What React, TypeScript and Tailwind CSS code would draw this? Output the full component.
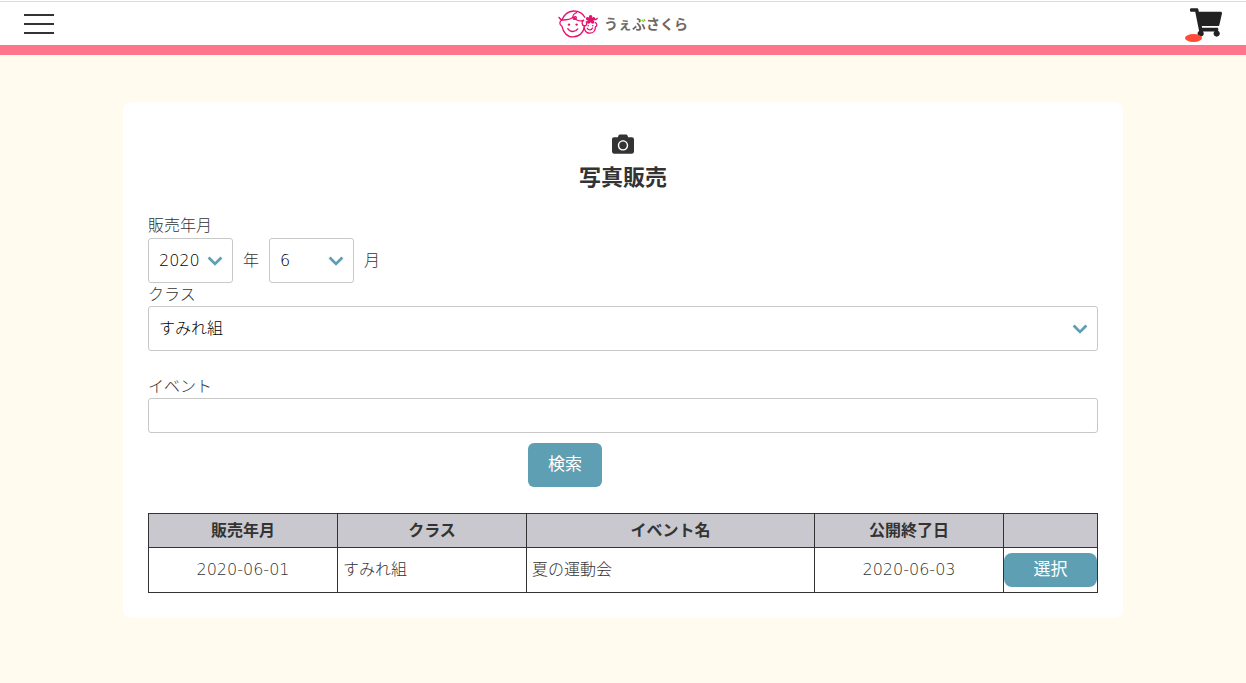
import { ComponentPropsWithRef } from 'react'
import { FaCamera, FaShoppingCart } from 'react-icons/fa'
import { twMerge } from 'tailwind-merge'

const events = [
  {
    id: 1,
    month: '2020-06-01',
    className: 'すみれ組',
    name: '夏の運動会',
    closesAt: '2020-06-03',
  },
]

interface SelectProps extends ComponentPropsWithRef<'select'> {
  options: string[]
}

function Select({ options, className, ...props }: SelectProps) {
  return (
    <div className={twMerge('relative', className)}>
      <select
        {...props}
        className="block h-[45px] w-full appearance-none rounded-[3px] border border-[#c8c8c8] bg-white pr-8 pl-2.5 text-base text-black"
      >
        {options.map((option) => (
          <option key={option}>{option}</option>
        ))}
      </select>
      <svg
        viewBox="0 0 16 12"
        className="pointer-events-none absolute top-[17px] right-2.5 h-3 w-4"
        fill="none"
        stroke="#5f9fb3"
        strokeWidth="2.8"
      >
        <path d="M1.6 2.6 8 8.9l6.4-6.3" />
      </svg>
    </div>
  )
}

function Logo() {
  return (
    <a href="#" className="flex items-center gap-1.5">
      <svg
        viewBox="0 0 40 30"
        className="h-[30px] w-10"
        fill="none"
        stroke="#e6116b"
        strokeWidth="1.3"
        strokeLinecap="round"
        strokeLinejoin="round"
      >
        <path d="M4.2 10.800C6.200 5.400 10.500 2.200 15.600 2c4.800-.1 9 2.300 11.200 6.300" />
        <path d="M1 8.400c1 1.900 2.600 2.700 4.800 2.600 4.300-.2 7.200-1.200 9.600-2.800" />
        <path d="M18.600 3.600c-2.800.8-4.200 3.200-3.600 5.400.5 1.900 3 1.900 3.300.1.200-1.500-1.200-1.900-2.200-.9 1.900 3.400 5.800 4.100 9.500 3.500" />
        <path d="M3.700 11.400c-2.300.4-2.600 4.800.2 5.800 1.100 6.300 5.500 10.700 11.200 10.700 6.200 0 10.800-4.700 11.300-10.900" />
        <path d="M25.600 11.100c-2.300 1.500-1.800 5.100.6 5.900 2.400.2 3.200-2.600 2-4.300" />
        <path d="M9.800 19.600c2.200 3.700 7.600 3.900 9.900.3" />
        <path d="M26.200 19.200c.9 3.200 3 5 5.700 5 3.300 0 5.500-2.800 5.500-6.300 2.100-.8 1.800-3.600-.2-4.300" />
        <path d="M29.200 19.200c1.300 2.400 4.200 2.300 5.300-.1" />
        <path d="M36.400 10.600c1.200.1 2.200-.3 2.800-1.300" />
        <g fill="#e6116b" stroke="none">
          <circle cx="11" cy="15.600" r="1.200" />
          <circle cx="18.600" cy="15.600" r="1.200" />
          <circle cx="30.200" cy="16.800" r=".8" />
          <circle cx="34.800" cy="16.800" r=".8" />
          <circle cx="32.600" cy="7.800" r="1.700" />
          <circle cx="35.600" cy="9.800" r="1.700" />
          <circle cx="34.600" cy="13" r="1.700" />
          <circle cx="30.600" cy="13" r="1.700" />
          <circle cx="29.600" cy="9.800" r="1.700" />
          <circle cx="32.600" cy="10.800" r="2.600" />
        </g>
      </svg>
      <span className="text-sm font-bold text-[#706864]">
        うぇ
        <span className="bg-[radial-gradient(circle_at_84%_28%,#75bd35_4px,#706864_4px)] bg-clip-text text-transparent">
          ぶ
        </span>
        さくら
      </span>
    </a>
  )
}

function Header() {
  return (
    <header className="border-b-[10px] border-[#ff758c] bg-white pt-px">
      <div className="grid h-11 grid-cols-3 items-center border-t border-[#dcdcdc] px-6">
        <button aria-label="メニュー" className="w-[30px] space-y-[7px]">
          <span className="block h-0.5 bg-[#333]" />
          <span className="block h-0.5 bg-[#333]" />
          <span className="block h-0.5 bg-[#333]" />
        </button>
        <div className="flex justify-center">
          <Logo />
        </div>
        <a href="#" aria-label="カート" className="relative justify-self-end">
          <FaShoppingCart className="mb-0.5 h-[29px] w-8 text-[#222]" />
          <span className="absolute -bottom-[3px] -left-[5px] h-2 w-[17px] rounded-[50%] bg-[#ff4b37]" />
        </a>
      </div>
    </header>
  )
}

export default function App() {
  return (
    <div className="min-h-screen bg-[#fffbef] pb-16 font-['DejaVu_Sans','Noto_Sans_CJK_JP',sans-serif] text-base font-light text-[#333]">
      <Header />

      <main className="mx-auto mt-[47px] max-w-[1000px] rounded-lg bg-white p-[25px]">
        <div className="flex flex-col items-center pt-1.5">
          <FaCamera className="size-[22px]" />
          <h1 className="mt-[7px] text-[22px] leading-8 font-bold">写真販売</h1>
        </div>

        <form className="mt-5" onSubmit={(ev) => ev.preventDefault()}>
          <label htmlFor="year" className="block leading-6">
            販売年月
          </label>
          <div className="flex items-center">
            <Select id="year" className="w-[85px]" options={['2020']} />
            <label htmlFor="year" className="mx-2.5">
              年
            </label>
            <Select
              id="month"
              className="w-[85px]"
              defaultValue="6"
              options={['6', '7']}
            />
            <label htmlFor="month" className="mx-2.5">
              月
            </label>
          </div>

          <label htmlFor="class" className="block leading-[23px]">
            クラス
          </label>
          <Select id="class" options={['すみれ組']} />

          <label htmlFor="event" className="mt-6 block leading-[23px]">
            イベント
          </label>
          <input
            id="event"
            type="text"
            className="block h-[35px] w-full rounded-[3px] border border-[#c8c8c8] bg-white px-2.5"
          />

          <button className="mt-2.5 ml-[40%] block h-11 rounded-md bg-[#5f9fb3] px-5 text-[17px] font-normal text-white">
            検索
          </button>
        </form>

        <table className="mt-[26px] w-full table-fixed border-collapse [&_td]:border [&_td]:border-[#333] [&_th]:border [&_th]:border-[#333]">
          <thead>
            <tr className="h-[34px] bg-[#c8c8ce] font-bold">
              <th className="w-[189px]">販売年月</th>
              <th className="w-[189px]">クラス</th>
              <th>イベント名</th>
              <th className="w-[189px]">公開終了日</th>
              <th className="w-[94px]" aria-label="操作" />
            </tr>
          </thead>
          <tbody>
            {events.map((event) => (
              <tr key={event.id} className="h-[45px]">
                <td className="text-center">{event.month}</td>
                <td className="px-[5px]">{event.className}</td>
                <td className="px-[5px]">{event.name}</td>
                <td className="text-center">{event.closesAt}</td>
                <td>
                  <button className="block h-[34px] w-full rounded-lg bg-[#5f9fb3] text-[17px] font-normal text-white">
                    選択
                  </button>
                </td>
              </tr>
            ))}
          </tbody>
        </table>
      </main>
    </div>
  )
}
